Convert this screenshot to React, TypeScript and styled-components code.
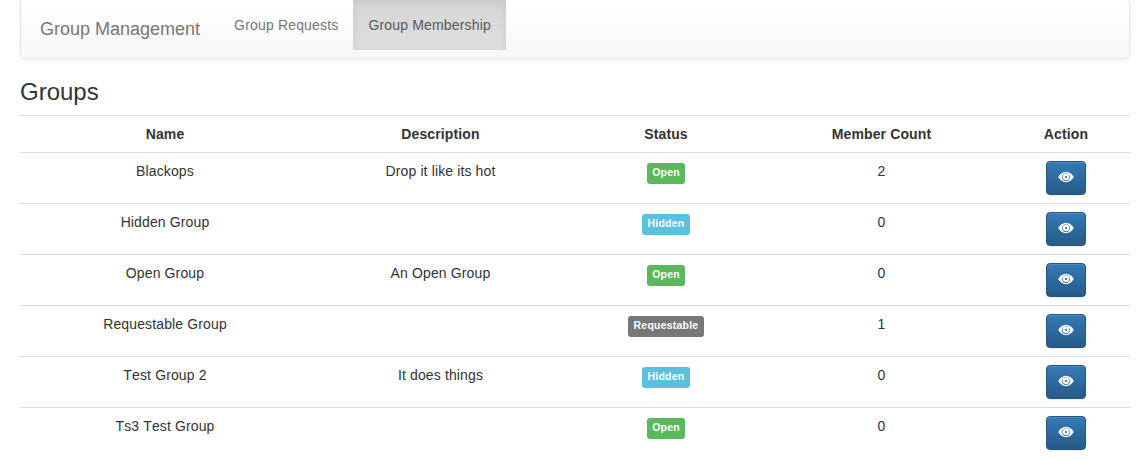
import React from "react";
import styled, { createGlobalStyle } from "styled-components";

const Global = createGlobalStyle`
  html, body { margin: 0; padding: 0; background: #fff; }
  body { font-family: "Liberation Sans", Arial, sans-serif; font-size: 14px; line-height: 20px; color: #333; font-kerning: none; letter-spacing: 0.13px; }
`;

const Page = styled.div`
  padding: 0 16px 0 20px;
`;

const Navbar = styled.nav`
  display: flex;
  align-items: flex-start;
  height: 60px;
  margin-top: -1px;
  box-sizing: border-box;
  border: 1px solid #e7e7e7;
  border-radius: 4px;
  background: linear-gradient(to bottom, #fff 0%, #f8f8f8 100%);
  box-shadow: inset 0 1px 0 rgba(255, 255, 255, 0.15), 0 1px 5px rgba(0, 0, 0, 0.075);
`;

const Brand = styled.a`
  font-size: 18px;
  line-height: 20px;
  letter-spacing: 0;
  color: #777;
  padding: 19px 19px 0;
  text-shadow: 0 1px 0 rgba(255, 255, 255, 0.25);
`;

const NavList = styled.ul`
  display: flex;
  list-style: none;
  margin: 0;
  padding: 0;
`;

const NavItem = styled.li<{ $active?: boolean }>`
  padding: 15px 15px 15px;
  height: 50px;
  box-sizing: border-box;
  letter-spacing: 0.17px;
  color: ${(p) => (p.$active ? "#555" : "#777")};
  background: ${(p) => (p.$active ? "linear-gradient(to bottom, #d6d6d6 0%, #dedede 100%)" : "transparent")};
  box-shadow: ${(p) => (p.$active ? "inset 0 3px 9px rgba(0, 0, 0, 0.075)" : "none")};
  text-shadow: 0 1px 0 rgba(255, 255, 255, 0.25);
`;

const Title = styled.h3`
  margin: 20px 0 10px;
  font-size: 24px;
  font-weight: 500;
  line-height: 26px;
  letter-spacing: 0;
  color: #333;
`;

const Table = styled.table`
  width: 1110px;
  border-collapse: collapse;
  table-layout: fixed;
  border-spacing: 0;
`;

const Th = styled.th<{ $w: number }>`
  width: ${(p) => p.$w}px;
  padding: 8px;
  box-sizing: border-box;
  height: 37px;
  text-align: center;
  font-weight: 700;
  line-height: 20px;
  border-top: 1px solid #ddd;
  border-bottom: 1px solid #ddd;
`;

const Td = styled.td`
  padding: 8px;
  height: 51px;
  box-sizing: border-box;
  text-align: center;
  vertical-align: top;
  line-height: 20px;
  border-top: 1px solid #ddd;
`;

const Row = styled.tr`
  &:first-child td { border-top: none; }
`;

const Label = styled.span<{ $bg: string }>`
  display: inline-block;
  padding: 2px 5.5px 5px;
  font-size: 10.5px;
  font-weight: 700;
  line-height: 14px;
  color: #fff;
  background: ${(p) => p.$bg};
  border-radius: 3px;
  vertical-align: top;
  margin-top: 2px;
  letter-spacing: 0.22px;
`;

const ActionButton = styled.button`
  display: inline-flex;
  align-items: center;
  justify-content: center;
  width: 40px;
  height: 34px;
  padding: 0 0 3px;
  color: #fff;
  background: linear-gradient(to bottom, #337ab7 0%, #265a88 100%);
  border: 1px solid #245580;
  border-radius: 4px;
  box-shadow: inset 0 1px 0 rgba(255, 255, 255, 0.15), 0 1px 1px rgba(0, 0, 0, 0.075);
`;

const Eye = () => (
  <svg width="16" height="12" viewBox="0 0 16 12" aria-hidden="true">
    <path
      fillRule="evenodd"
      fill="#fff"
      d="M8 .8C4.7.8 2 3 .2 6 2 9 4.7 11.2 8 11.2S14 9 15.8 6C14 3 11.3.8 8 .8ZM8 2.2A3.9 3.9 0 0 1 11.9 6 3.9 3.9 0 0 1 8 9.9 3.9 3.9 0 0 1 4.1 6 3.9 3.9 0 0 1 8 2.2Z"
    />
    <path
      fillRule="evenodd"
      fill="#fff"
      d="M8 2.6A3.3 3.3 0 1 0 11.3 6 3.3 3.3 0 0 0 8 2.6ZM8 4.9A1.1 1.1 0 1 1 6.9 6 1.1 1.1 0 0 1 8 4.9Z"
    />
  </svg>
);

const COLORS: Record<string, string> = {
  Open: "#5cb85c",
  Hidden: "#5bc0de",
  Requestable: "#777",
};

const groups = [
  { name: "Blackops", desc: "Drop it like its hot", status: "Open", count: 2 },
  { name: "Hidden Group", desc: "", status: "Hidden", count: 0 },
  { name: "Open Group", desc: "An Open Group", status: "Open", count: 0 },
  { name: "Requestable Group", desc: "", status: "Requestable", count: 1 },
  { name: "Test Group 2", desc: "It does things", status: "Hidden", count: 0 },
  { name: "Ts3 Test Group", desc: "", status: "Open", count: 0 },
];

export default function App() {
  return (
    <Page>
      <Global />
      <Navbar>
        <Brand>Group Management</Brand>
        <NavList>
          <NavItem>Group Requests</NavItem>
          <NavItem $active>Group Membership</NavItem>
        </NavList>
      </Navbar>
      <Title>Groups</Title>
      <Table>
        <thead>
          <tr>
            <Th $w={290}>Name</Th>
            <Th $w={261}>Description</Th>
            <Th $w={190}>Status</Th>
            <Th $w={241}>Member Count</Th>
            <Th $w={128}>Action</Th>
          </tr>
        </thead>
        <tbody>
          {groups.map((g) => (
            <Row key={g.name}>
              <Td>{g.name}</Td>
              <Td>{g.desc}</Td>
              <Td>
                <Label $bg={COLORS[g.status]}>{g.status}</Label>
              </Td>
              <Td>{g.count}</Td>
              <Td>
                <ActionButton aria-label="View">
                  <Eye />
                </ActionButton>
              </Td>
            </Row>
          ))}
        </tbody>
      </Table>
    </Page>
  );
}
